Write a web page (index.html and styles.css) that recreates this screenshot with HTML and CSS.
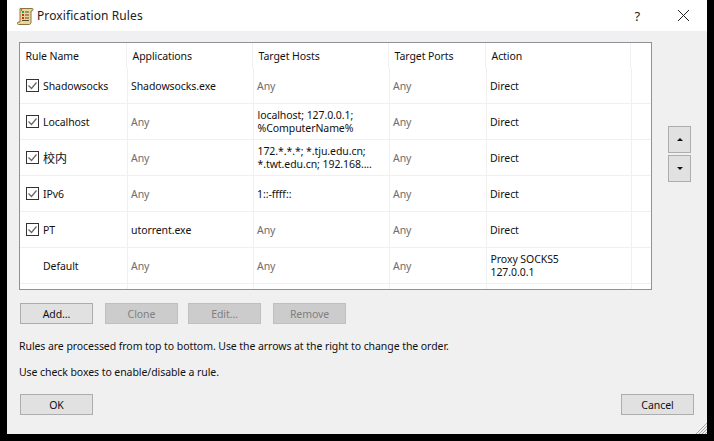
FILE: index.html
```html
<!DOCTYPE html>
<html lang="en">
<head>
<meta charset="utf-8">
<title>Proxification Rules</title>
<link rel="stylesheet" href="styles.css">
</head>
<body>
<div class="window">
  <header class="titlebar">
    <svg class="app-icon" width="17" height="18" viewBox="0 0 17 18">
      <path d="M3 1.500h12.500c.8 0 .8 2.200-.5 2.500H14v11c0 1.500-1 2.500-2 2.500H1.500C.5 17.500 0 15.500 1 15h2z" fill="#e8d69a" stroke="#8a7440" stroke-width="1"/>
      <path d="M3 1.500c1-.5 2 .5 1.500 2.500" fill="none" stroke="#8a7440"/>
      <rect x="5" y="4" width="2" height="2" fill="#1fa83a"/>
      <rect x="5" y="7" width="2" height="2" fill="#d92a1c"/>
      <rect x="5" y="10" width="2" height="2" fill="#d92a1c"/>
      <path d="M8 5h4M8 8h4M8 11h4M5 13.500h7" stroke="#5a4a28" stroke-width="1"/>
    </svg>
    <span class="title">Proxification Rules</span>
    <span class="help">?</span>
    <svg class="close" width="13" height="13" viewBox="0 0 13 13"><path d="M1 1l11 11M12 1L1 12" stroke="#222" stroke-width="1" fill="none"/></svg>
  </header>
  <main class="body">
    <div class="table-row">
      <div class="table">
        <div class="row head">
          <div class="cell name">Rule Name</div>
          <div class="cell">Applications</div>
          <div class="cell">Target Hosts</div>
          <div class="cell">Target Ports</div>
          <div class="cell">Action</div>
          <div class="cell"></div>
        </div>
        <div class="row">
          <div class="cell name"><span class="check"><svg width="11" height="11" viewBox="0 0 11 11"><path d="M1.500 5.500l3 3 5-6" fill="none" stroke="#666" stroke-width="1.200"/></svg></span>Shadowsocks</div>
          <div class="cell">Shadowsocks.exe</div>
          <div class="cell any">Any</div>
          <div class="cell any">Any</div>
          <div class="cell">Direct</div>
          <div class="cell"></div>
        </div>
        <div class="row">
          <div class="cell name"><span class="check"><svg width="11" height="11" viewBox="0 0 11 11"><path d="M1.500 5.500l3 3 5-6" fill="none" stroke="#666" stroke-width="1.200"/></svg></span>Localhost</div>
          <div class="cell any">Any</div>
          <div class="cell multi">localhost; 127.0.0.1;<br>%ComputerName%</div>
          <div class="cell any">Any</div>
          <div class="cell">Direct</div>
          <div class="cell"></div>
        </div>
        <div class="row">
          <div class="cell name"><span class="check"><svg width="11" height="11" viewBox="0 0 11 11"><path d="M1.500 5.500l3 3 5-6" fill="none" stroke="#666" stroke-width="1.200"/></svg></span><span class="cjk">校内</span></div>
          <div class="cell any">Any</div>
          <div class="cell multi">172.*.*.*; *.tju.edu.cn;<br>*.twt.edu.cn; 192.168....</div>
          <div class="cell any">Any</div>
          <div class="cell">Direct</div>
          <div class="cell"></div>
        </div>
        <div class="row">
          <div class="cell name"><span class="check"><svg width="11" height="11" viewBox="0 0 11 11"><path d="M1.500 5.500l3 3 5-6" fill="none" stroke="#666" stroke-width="1.200"/></svg></span>IPv6</div>
          <div class="cell any">Any</div>
          <div class="cell">1::-ffff::</div>
          <div class="cell any">Any</div>
          <div class="cell">Direct</div>
          <div class="cell"></div>
        </div>
        <div class="row">
          <div class="cell name"><span class="check"><svg width="11" height="11" viewBox="0 0 11 11"><path d="M1.500 5.500l3 3 5-6" fill="none" stroke="#666" stroke-width="1.200"/></svg></span>PT</div>
          <div class="cell">utorrent.exe</div>
          <div class="cell any">Any</div>
          <div class="cell any">Any</div>
          <div class="cell">Direct</div>
          <div class="cell"></div>
        </div>
        <div class="row">
          <div class="cell name plain">Default</div>
          <div class="cell any">Any</div>
          <div class="cell any">Any</div>
          <div class="cell any">Any</div>
          <div class="cell multi">Proxy SOCKS5<br>127.0.0.1</div>
          <div class="cell"></div>
        </div>
        <div class="row stub">
          <div class="cell"></div><div class="cell"></div><div class="cell"></div><div class="cell"></div><div class="cell"></div><div class="cell"></div>
        </div>
      </div>
      <div class="arrows">
        <button class="btn arrow" type="button"><span class="tri up"></span></button>
        <button class="btn arrow" type="button"><span class="tri down"></span></button>
      </div>
    </div>
    <div class="actions">
      <button class="btn wide" type="button">Add...</button>
      <button class="btn wide off" type="button">Clone</button>
      <button class="btn wide off tight" type="button">Edit...</button>
      <button class="btn wide off" type="button">Remove</button>
    </div>
    <p class="note first-note">Rules are processed from top to bottom. Use the arrows at the right to change the order.</p>
    <p class="note second-note">Use check boxes to enable/disable a rule.</p>
    <div class="footer">
      <button class="btn wide" type="button">OK</button>
      <button class="btn wide" type="button">Cancel</button>
    </div>
    <svg class="grip" width="12" height="12" viewBox="0 0 12 12"><path d="M12 1L1 12M12 4L4 12M12 7L7 12M12 10L10 12" stroke="#a8a8a8" stroke-width="1" fill="none"/></svg>
  </main>
</div>
</body>
</html>
```
FILE: styles.css
```css
* { box-sizing: border-box; }
html, body { margin: 0; height: 100%; }
body {
  background: #000;
  width: 714px;
  height: 441px;
  overflow: hidden;
  font-family: "Noto Sans", "Noto Sans CJK SC", sans-serif;
  font-size: 10.5px;
  letter-spacing: -0.07px;
  color: #111;
}
.window {
  margin-left: 7px;
  width: 700px;
  height: 434px;
  display: flex;
  flex-direction: column;
  background: #f0f0f0;
}
.titlebar {
  height: 31px;
  flex: none;
  background: #fff;
  display: flex;
  align-items: center;
  padding: 0 17px 0 10px;
}
.app-icon { margin-right: 3px; flex: none; }
.title { font-size: 12px; letter-spacing: 0.1px; flex: 1; color: #222; }
.help { font-size: 13px; margin-right: 37px; color: #222; }
.close { flex: none; }
.body {
  position: relative;
  flex: 1;
  padding: 11px 13px 13px 12px;
  display: flex;
  flex-direction: column;
}
.table-row { display: flex; align-items: flex-start; }
.table {
  width: 633px;
  height: 248px;
  background: #fff;
  border: 1px solid #8f9196;
  overflow: hidden;
  flex: none;
}
.row {
  display: grid;
  grid-template-columns: 108px 126px 136px 97px 145px 19px;
  height: 36px;
  border-bottom: 1px solid #f0f0f0;
}
.row.head {
  height: 25px;
  border-bottom: 0;
  grid-template-columns: 107px 126px 136px 97px 145px 20px;
}
.row.stub { height: 6px; border-bottom: 0; }
.cell {
  display: flex;
  align-items: center;
  border-right: 1px solid #f0f0f0;
  padding-left: 3px;
  min-width: 0;
  white-space: nowrap;
}
.row .cell:last-child { border-right: 0; }
.row.head .cell { padding: 1px 0 0 5.500px; height: 25px; }
.row:not(.head) .cell:first-child { padding-left: 6px; }
.row:not(.head) .cell.plain { padding-left: 23px; }
.cell.any { color: #6d6d6d; }
.cell.multi { line-height: 13px; padding-left: 3.500px; }
.cjk { font-size: 12px; }
.check {
  width: 13px;
  height: 13px;
  border: 1px solid #333;
  margin-right: 4px;
  flex: none;
  display: inline-flex;
  align-items: center;
  justify-content: center;
  background: #fff;
}
.check svg { display: block; flex: none; }
.arrows {
  display: flex;
  flex-direction: column;
  gap: 2px;
  margin: 84px 0 0 16px;
}
.btn {
  font: inherit;
  letter-spacing: inherit;
  color: #111;
  background: #e1e1e1;
  border: 1px solid #adadad;
  padding: 0;
  display: flex;
  align-items: center;
  justify-content: center;
}
.arrow { width: 23px; height: 27px; }
.tri { width: 0; height: 0; border-left: 3px solid transparent; border-right: 3px solid transparent; }
.tri.up { border-bottom: 3px solid #111; }
.tri.down { border-top: 3px solid #111; }
.wide { width: 73px; height: 21px; }
.off { background: #ccc; border-color: #bfbfbf; color: #808080; }
.tight { margin-left: -2px; }
.actions {
  display: flex;
  gap: 12px;
  margin: 13px 0 0 1px;
}
.note { margin: 0; line-height: 14px; }
.first-note { margin-top: 15px; }
.second-note { margin-top: 12px; }
.footer {
  display: flex;
  justify-content: space-between;
  margin: 15px 0 0 1px;
}
.grip { position: absolute; right: 0; bottom: 0; }
```
